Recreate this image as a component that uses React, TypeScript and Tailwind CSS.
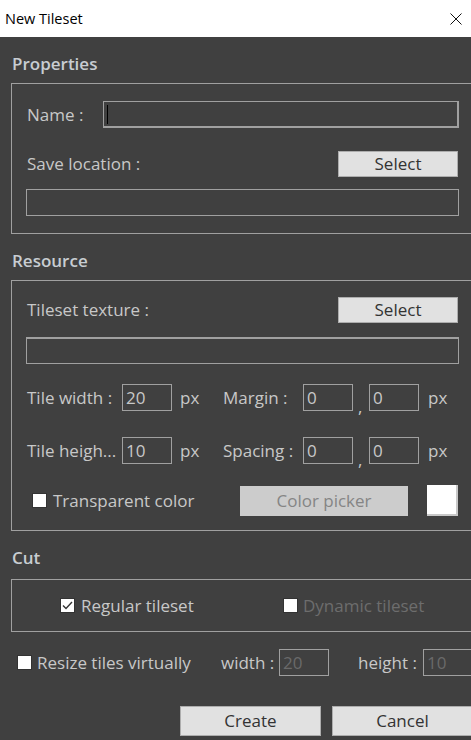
import { type ReactNode } from 'react';

const font = "font-['Segoe_UI','Open_Sans','Noto_Sans',sans-serif]";

function Field({ w, value, dim, className = '', children }: { w: string; value?: string; dim?: boolean; className?: string; children?: ReactNode }) {
  return (
    <div
      className={`${w} h-[27px] shrink-0 border border-[#a0a0a0] bg-[#404040] pl-[3px] flex items-center text-[17px] ${
        dim ? 'text-[#6a6a6a]' : 'text-[#c8c8c8]'
      } ${className}`}
    >
      {value}
      {children}
    </div>
  );
}

function Btn({ children, className = '', disabled }: { children: ReactNode; className?: string; disabled?: boolean }) {
  return (
    <button
      className={`shrink-0 flex items-center justify-center border text-[17px] ${
        disabled ? 'bg-[#cccccc] border-[#cccccc] text-[#858585]' : 'bg-[#e1e1e1] border-[#adadad] text-[#333333]'
      } ${className}`}
    >
      {children}
    </button>
  );
}

function Check({ checked }: { checked?: boolean }) {
  return (
    <span className="w-[15px] h-[15px] shrink-0 bg-white border border-[#333333] flex items-center justify-center">
      {checked && (
        <svg width="11" height="9" viewBox="0 0 11 9">
          <path d="M1 4.5 L4 7.5 L10 1" fill="none" stroke="#333" strokeWidth="1.4" />
        </svg>
      )}
    </span>
  );
}

function Heading({ children, h }: { children: ReactNode; h: string }) {
  return (
    <div className={`${h} pt-[17px] pl-[1px] leading-[20px] text-[17px] font-semibold text-[#c8cdd2]`}>{children}</div>
  );
}

export default function App() {
  return (
    <div className={`w-[471px] h-[740px] overflow-hidden bg-[#404040] ${font}`}>
      <div className="h-[37px] bg-white flex items-center justify-between pl-[5px] pr-[9px]">
        <span className="text-[14.5px] text-black">New Tileset</span>
        <svg width="12" height="12" viewBox="0 0 12 12">
          <path d="M0.5 0.5 L11.5 11.5 M11.5 0.5 L0.5 11.5" stroke="#111" strokeWidth="1" />
        </svg>
      </div>

      <div className="pl-[11px] text-[17px] text-[#c8c8c8] [&_span]:shrink-0">
        <Heading h="h-[46px]">Properties</Heading>
        <div className="w-[480px] h-[151px] border border-[#a0a0a0] pl-[14px] pt-[17px] flex flex-col">
          <div className="w-[433px] flex items-center">
            <span className="w-[77px] pl-[1px]">Name :</span>
            <Field w="w-[356px]" className="pl-[3px] border-b-2 border-r-2">
              <span className="w-px h-[19px] bg-black" />
            </Field>
          </div>
          <div className="w-[433px] mt-[23px] flex items-center justify-between">
            <span className="pl-[1px]">Save location :</span>
            <Btn className="w-[120px] h-[26px] mr-[1px]">Select</Btn>
          </div>
          <Field w="w-[433px]" className="mt-[12px]" />
        </div>

        <Heading h="h-[46px]">Resource</Heading>
        <div className="w-[480px] h-[251px] border border-[#a0a0a0] pl-[14px] pt-[16px] flex flex-col">
          <div className="w-[433px] flex items-center justify-between">
            <span className="pl-[1px]">Tileset texture :</span>
            <Btn className="w-[120px] h-[26px] mr-[1px]">Select</Btn>
          </div>
          <Field w="w-[433px]" className="mt-[14px] border-t-2" />
          <div className="mt-[20px] flex items-center">
            <span className="w-[96px] pl-[1px]">Tile width :</span>
            <Field w="w-[50px]" value="20" />
            <span className="w-[51px] pl-[8px]">px</span>
            <span className="w-[80px]">Margin :</span>
            <Field w="w-[50px]" value="0" />
            <span className="w-[16px] self-end pl-[5px] leading-[8px]">,</span>
            <Field w="w-[50px]" value="0" />
            <span className="pl-[9px]">px</span>
          </div>
          <div className="mt-[26px] flex items-center">
            <span className="w-[96px] pl-[1px]">Tile heigh...</span>
            <Field w="w-[50px]" value="10" />
            <span className="w-[51px] pl-[8px]">px</span>
            <span className="w-[80px]">Spacing :</span>
            <Field w="w-[50px]" value="0" />
            <span className="w-[16px] self-end pl-[5px] leading-[8px]">,</span>
            <Field w="w-[50px]" value="0" />
            <span className="pl-[9px]">px</span>
          </div>
          <div className="mt-[21px] h-[31px] flex items-center">
            <span className="w-[6px]" />
            <Check />
            <span className="w-[193px] pl-[6px]">Transparent color</span>
            <Btn disabled className="w-[168px] h-[30px] mt-[1px]">
              Color picker
            </Btn>
            <span className="ml-[19px] w-[31px] h-[31px] bg-white border-r-2 border-b-2 border-[#c8c8c8]" />
          </div>
        </div>

        <Heading h="h-[48px]">Cut</Heading>
        <div className="w-[480px] h-[53px] border border-[#a0a0a0] flex items-center">
          <span className="w-[48px]" />
          <Check checked />
          <span className="w-[208px] pl-[6px]">Regular tileset</span>
          <Check />
          <span className="pl-[5px] text-[#6d6d6d]">Dynamic tileset</span>
        </div>

        <div className="mt-[17px] flex items-center">
          <span className="w-[6px]" />
          <Check />
          <span className="w-[189px] pl-[5px]">Resize tiles virtually</span>
          <span className="w-[58px]">width :</span>
          <Field w="w-[50px]" value="20" dim />
          <span className="w-[29px]" />
          <span className="w-[65px]">height :</span>
          <Field w="w-[60px]" value="10" dim />
        </div>

        <div className="mt-[30px] flex">
          <span className="w-[169px]" />
          <Btn className="w-[141px] h-[30px]">Create</Btn>
          <Btn className="w-[141px] h-[30px] ml-[11px]">Cancel</Btn>
        </div>
      </div>
    </div>
  );
}
